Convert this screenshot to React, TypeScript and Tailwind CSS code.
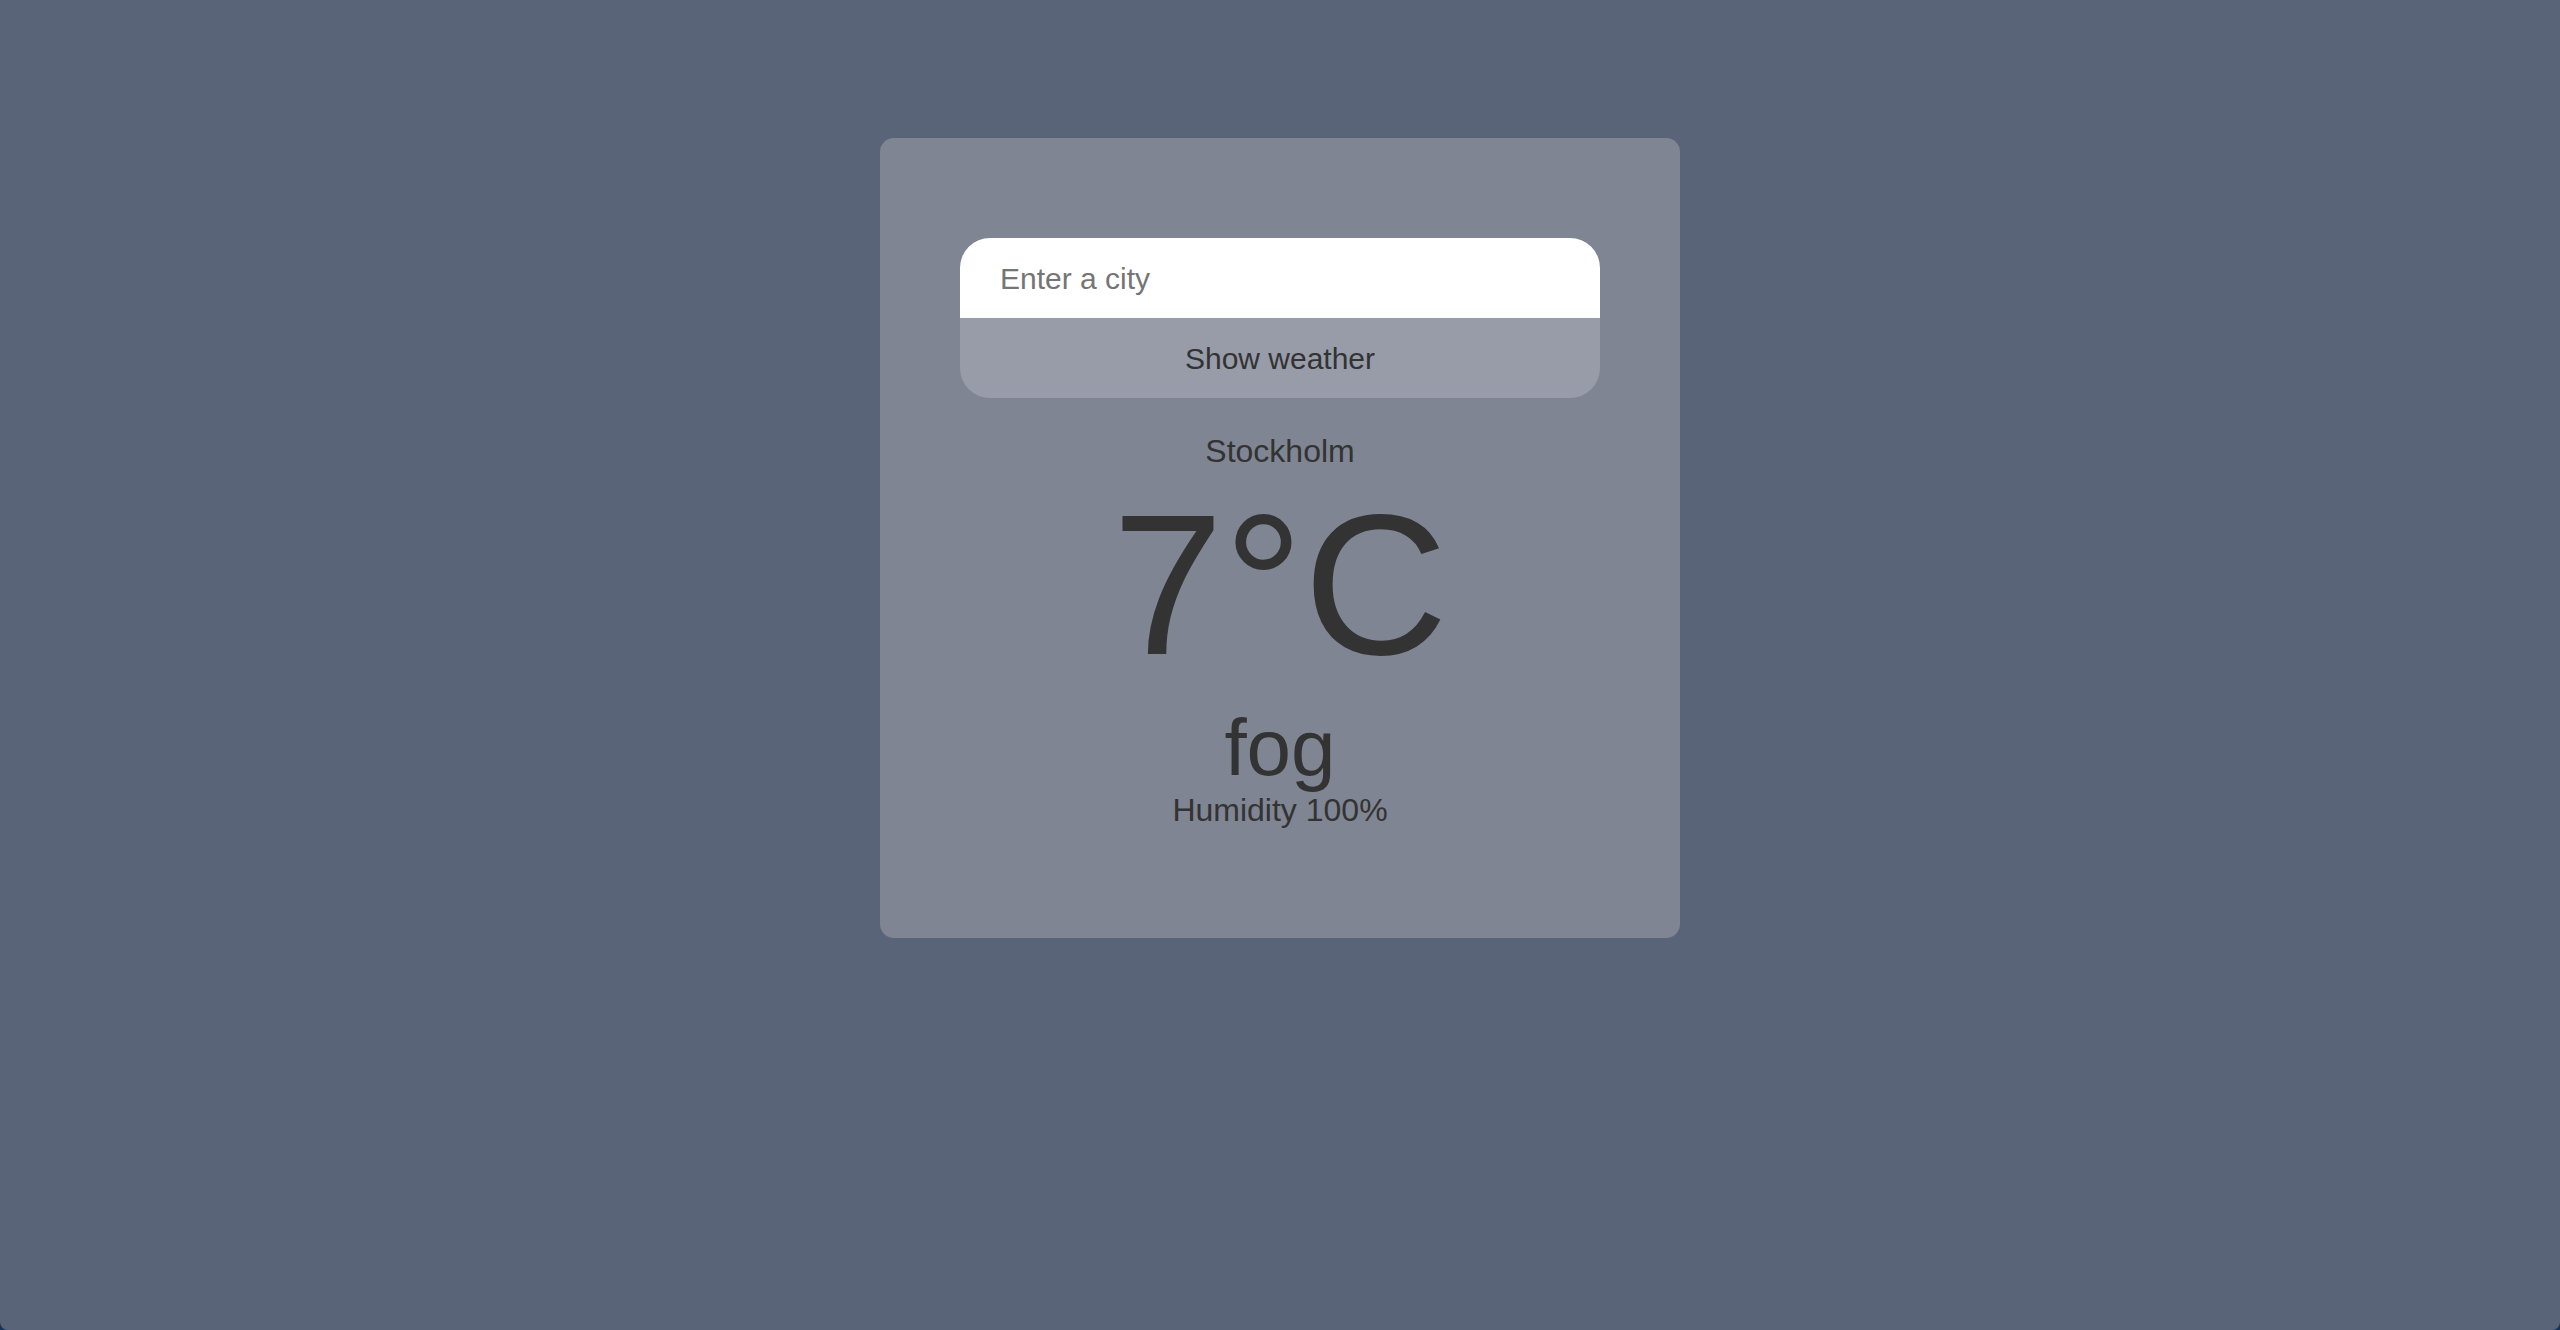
import React, { useState } from 'react';

const App = () => {
    const [city, setCity] = useState('');

    return (
        <div className="h-screen bg-[#14345a]">
            <div
                className="flex justify-center h-full bg-[#5a6479] rounded-b-[8px]"
                style={{ fontFamily: '"Liberation Sans", Arial, sans-serif' }}
            >
                <div className="mt-[138px] w-[800px] h-[800px] bg-[#7f8592] rounded-[14px] px-[80px] pt-[100px] flex flex-col items-center text-[#333333]">
                    <form
                        className="w-full flex flex-col rounded-[30px] overflow-hidden"
                        onSubmit={(e) => e.preventDefault()}
                    >
                        <input
                            type="text"
                            value={city}
                            onChange={(e) => setCity(e.target.value)}
                            placeholder="Enter a city"
                            className="h-[80px] bg-white px-[40px] pt-[2px] text-[30px] text-[#333333] placeholder:text-[#757575] outline-none"
                        />
                        <button
                            type="submit"
                            className="h-[80px] bg-[#979ca8] text-[30px] text-[#333333]"
                        >
                            Show weather
                        </button>
                    </form>
                    <div className="mt-[35px] text-[32px] leading-[36px]">Stockholm</div>
                    <div className="mt-[4px] text-[200px] leading-[223px]">7°C</div>
                    <div className="mt-[7px] text-[80px] leading-[89px]">fog</div>
                    <div className="text-[32px] leading-[36px]">Humidity 100%</div>
                </div>
            </div>
        </div>
    );
};

export default App;
